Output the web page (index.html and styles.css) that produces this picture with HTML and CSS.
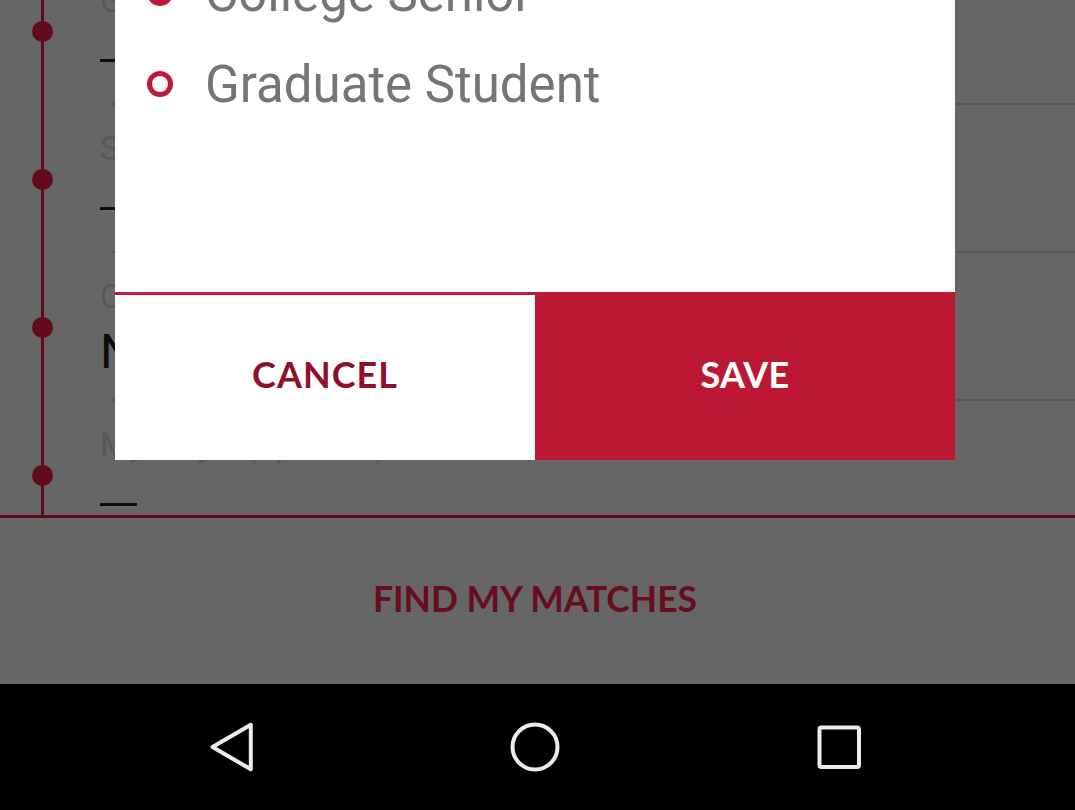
FILE: index.html
```html
<!DOCTYPE html>
<html lang="en">
<head>
<meta charset="utf-8">
<title>Find my matches</title>
<link rel="stylesheet" href="styles.css">
</head>
<body>
<div class="screen">
  <div class="form-viewport">
    <div class="form-list">
      <div class="row">
        <div class="rail"><span class="dot"></span></div>
        <div class="field">
          <div class="label">Grade Level</div>
          <div class="value"><span class="dash"></span></div>
        </div>
      </div>
      <div class="row">
        <div class="rail"><span class="dot"></span></div>
        <div class="field">
          <div class="label">State of Residence</div>
          <div class="value"><span class="dash"></span></div>
        </div>
      </div>
      <div class="row">
        <div class="rail"><span class="dot"></span></div>
        <div class="field">
          <div class="label">Citizenship</div>
          <div class="value value-text">No preference</div>
        </div>
      </div>
      <div class="row row-last">
        <div class="rail"><span class="dot"></span></div>
        <div class="field">
          <div class="label">My Major (optional)</div>
          <div class="value"><span class="dash"></span></div>
        </div>
      </div>
    </div>
  </div>

  <div class="cta">FIND MY MATCHES</div>

  <nav class="navbar">
    <span class="nav-btn">
      <svg width="60" height="60" viewBox="0 0 60 60"><path d="M48.8 7.7 L10.5 30 L48.8 52.3 Z" fill="none" stroke="#ececec" stroke-width="4" stroke-linejoin="round"/></svg>
    </span>
    <span class="nav-btn">
      <svg width="60" height="60" viewBox="0 0 60 60"><circle cx="30" cy="30" r="22.5" fill="none" stroke="#ececec" stroke-width="4"/></svg>
    </span>
    <span class="nav-btn">
      <svg width="60" height="60" viewBox="0 0 60 60"><rect x="10.5" y="10.5" width="39.5" height="39.5" rx="2" fill="none" stroke="#ececec" stroke-width="4"/></svg>
    </span>
  </nav>

  <div class="dialog">
    <ul class="options">
      <li class="option"><span class="radio radio-on"></span><span class="option-text">College Senior</span></li>
      <li class="option"><span class="radio"></span><span class="option-text">Graduate Student</span></li>
    </ul>
    <div class="actions">
      <button class="btn btn-cancel">CANCEL</button>
      <button class="btn btn-save">SAVE</button>
    </div>
  </div>
</div>
</body>
</html>
```

FILE: styles.css
```css
html, body {
  margin: 0;
  padding: 0;
  background: #666666;
}

.screen {
  position: relative;
  width: 1075px;
  height: 810px;
  overflow: hidden;
  background: #666666;
  display: flex;
  flex-direction: column;
  font-family: Roboto, "Liberation Sans", sans-serif;
}

/* background form (dimmed) */
.form-viewport {
  height: 515px;
  overflow: hidden;
  border-bottom: 3px solid #5e0b1b;
}

.form-list {
  margin-top: -43px;
}

.row {
  display: flex;
  height: 148px;
  background: linear-gradient(#575757, #575757) no-repeat 112px 100% / calc(100% - 112px) 2px;
}

.rail {
  width: 100px;
  flex: none;
  background: linear-gradient(#620b1c, #620b1c) no-repeat 40.5px 0 / 3px 100%;
}

.dot {
  display: block;
  width: 21px;
  height: 21px;
  margin: 63.5px 0 0 31.5px;
  border-radius: 50%;
  background: #620b1c;
}

.field {
  flex: 1;
  padding-top: 24px;
}

.label {
  font-size: 33px;
  line-height: 40px;
  color: #585858;
  white-space: nowrap;
}

.value {
  margin-top: 7px;
  height: 56px;
}

.dash {
  display: block;
  width: 37px;
  height: 3px;
  margin-top: 38px;
  background: #0c0c0c;
}

.value-text {
  font-size: 48px;
  line-height: 56px;
  color: #0c0c0c;
  white-space: nowrap;
}

/* call to action */
.cta {
  height: 166px;
  display: flex;
  align-items: center;
  justify-content: center;
  padding: 0 5px 6px 0;
  box-sizing: border-box;
  font-family: Lato, "Open Sans", sans-serif;
  font-weight: 700;
  font-size: 35.5px;
  letter-spacing: 0;
  color: #680c20;
}

/* system nav bar */
.navbar {
  flex: 1;
  background: #000000;
  display: flex;
  align-items: center;
  justify-content: center;
  gap: 243.5px;
  padding-right: 5px;
  padding-bottom: 1px;
}

.nav-btn {
  display: block;
  width: 60px;
  height: 60px;
}

.nav-btn svg {
  display: block;
}

/* dialog */
.dialog {
  position: absolute;
  left: 115px;
  top: 0;
  width: 840px;
  height: 460px;
  background: #ffffff;
  display: flex;
  flex-direction: column;
  overflow: hidden;
}

.options {
  list-style: none;
  margin: -52px 0 0 0;
  padding: 0;
  flex: 1;
}

.option {
  display: flex;
  align-items: center;
  height: 91px;
  padding-left: 32px;
}

.radio {
  flex: none;
  width: 26px;
  height: 26px;
  box-sizing: border-box;
  border: 5px solid #c0173a;
  border-radius: 50%;
  margin-right: 32px;
  margin-top: -2px;
}

.radio-on {
  background: #c0173a;
}

.option-text {
  font-size: 51px;
  line-height: 91px;
  color: #757575;
  white-space: nowrap;
}

.actions {
  display: flex;
  height: 168px;
  border-top: 3px solid #c0173a;
  box-sizing: border-box;
}

.btn {
  flex: 1;
  border: 0;
  margin: 0;
  padding: 0 0 8px 0;
  font-family: Lato, "Open Sans", sans-serif;
  font-weight: 700;
  font-size: 36px;
  letter-spacing: 1px;
  cursor: pointer;
}

.btn-cancel {
  background: #ffffff;
  color: #8c1029;
}

.btn-save {
  background: #bc1834;
  color: #ffffff;
  margin-top: -3px;
  padding-top: 3px;
  letter-spacing: 0.3px;
}
```
